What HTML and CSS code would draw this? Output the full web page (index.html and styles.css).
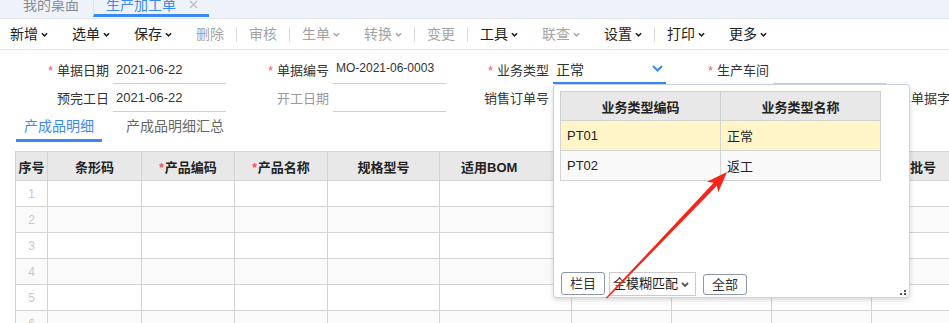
FILE: index.html
```html
<!DOCTYPE html>
<html lang="zh-CN">
  <head>
    <meta charset="UTF-8" />
    <title>生产加工单</title>
    <link rel="stylesheet" href="styles.css">
  </head>

  <body>
    <!-- page tabs -->
    <div class="tabbar">
      <div class="tab">我的桌面</div>
      <div class="tab active">
        生产加工单
        <svg class="close" width="9" height="9" viewBox="0 0 9 9">
          <path d="M1 1L8 8M8 1L1 8" stroke="#bdbdbd" stroke-width="1.3" fill="none" />
        </svg>
      </div>
    </div>

    <!-- toolbar -->
    <div class="toolbar">
      <span class="tb first">新增<svg class="chev" viewBox="0 0 8 5"><path d="M1 1l3 3 3-3" /></svg></span>
      <span class="tb">选单<svg class="chev" viewBox="0 0 8 5"><path d="M1 1l3 3 3-3" /></svg></span>
      <span class="tb">保存<svg class="chev" viewBox="0 0 8 5"><path d="M1 1l3 3 3-3" /></svg></span>
      <span class="tb off">删除</span>
      <span class="sep"></span>
      <span class="tb off">审核</span>
      <span class="sep"></span>
      <span class="tb off">生单<svg class="chev" viewBox="0 0 8 5"><path d="M1 1l3 3 3-3" /></svg></span>
      <span class="tb off">转换<svg class="chev" viewBox="0 0 8 5"><path d="M1 1l3 3 3-3" /></svg></span>
      <span class="sep"></span>
      <span class="tb off">变更</span>
      <span class="sep"></span>
      <span class="tb">工具<svg class="chev" viewBox="0 0 8 5"><path d="M1 1l3 3 3-3" /></svg></span>
      <span class="tb off">联查<svg class="chev" viewBox="0 0 8 5"><path d="M1 1l3 3 3-3" /></svg></span>
      <span class="tb">设置<svg class="chev" viewBox="0 0 8 5"><path d="M1 1l3 3 3-3" /></svg></span>
      <span class="sep"></span>
      <span class="tb">打印<svg class="chev" viewBox="0 0 8 5"><path d="M1 1l3 3 3-3" /></svg></span>
      <span class="tb">更多<svg class="chev" viewBox="0 0 8 5"><path d="M1 1l3 3 3-3" /></svg></span>
    </div>

    <!-- header form -->
    <div class="form">
      <div class="form-row">
        <div class="field">
          <label class="lbl"><i class="req">*</i>单据日期</label>
          <div class="inp">2021-06-22</div>
        </div>
        <div class="field">
          <label class="lbl"><i class="req">*</i>单据编号</label>
          <div class="inp small">MO-2021-06-0003</div>
        </div>
        <div class="field">
          <label class="lbl"><i class="req">*</i>业务类型</label>
          <div class="inp focus">
            正常
            <svg class="drop" width="11" height="7" viewBox="0 0 11 7"><path d="M1 1l4.5 4.5L10 1" /></svg>
          </div>
        </div>
        <div class="field">
          <label class="lbl"><i class="req">*</i>生产车间</label>
          <div class="inp"></div>
        </div>
      </div>
      <div class="form-row">
        <div class="field">
          <label class="lbl">预完工日</label>
          <div class="inp">2021-06-22</div>
        </div>
        <div class="field">
          <label class="lbl dim">开工日期</label>
          <div class="inp"></div>
        </div>
        <div class="field">
          <label class="lbl">销售订单号</label>
          <div class="inp"></div>
        </div>
        <div class="field">
          <label class="lbl"></label>
          <div class="inp none"></div>
        </div>
        <div class="field">
          <label class="lbl cut">单据字</label>
        </div>
      </div>
    </div>

    <!-- detail tabs -->
    <div class="subtabs">
      <div class="subtab active">产成品明细</div>
      <div class="subtab">产成品明细汇总</div>
    </div>

    <!-- detail grid -->
    <table class="grid">
      <colgroup>
        <col style="width:32px" />
        <col style="width:94px" />
        <col style="width:93px" />
        <col style="width:93px" />
        <col style="width:112px" />
        <col style="width:132px" />
        <col style="width:100px" />
        <col style="width:100px" />
        <col style="width:100px" />
        <col style="width:120px" />
      </colgroup>
      <thead>
        <tr>
          <th>序号</th>
          <th>条形码</th>
          <th><i class="req">*</i>产品编码</th>
          <th><i class="req">*</i>产品名称</th>
          <th>规格型号</th>
          <th class="th-left">适用BOM</th>
          <th></th>
          <th></th>
          <th></th>
          <th class="th-left far">批号</th>
        </tr>
      </thead>
      <tbody>
        <tr><td class="no">1</td><td></td><td></td><td></td><td></td><td></td><td></td><td></td><td></td><td></td></tr>
        <tr><td class="no">2</td><td></td><td></td><td></td><td></td><td></td><td></td><td></td><td></td><td></td></tr>
        <tr><td class="no">3</td><td></td><td></td><td></td><td></td><td></td><td></td><td></td><td></td><td></td></tr>
        <tr><td class="no">4</td><td></td><td></td><td></td><td></td><td></td><td></td><td></td><td></td><td></td></tr>
        <tr><td class="no">5</td><td></td><td></td><td></td><td></td><td></td><td></td><td></td><td></td><td></td></tr>
        <tr><td class="no">6</td><td></td><td></td><td></td><td></td><td></td><td></td><td></td><td></td><td></td></tr>
      </tbody>
    </table>

    <!-- business type lookup -->
    <div class="popup">
      <table class="pick">
        <thead>
          <tr><th>业务类型编码</th><th>业务类型名称</th></tr>
        </thead>
        <tbody>
          <tr class="cur"><td>PT01</td><td>正常</td></tr>
          <tr><td>PT02</td><td>返工</td></tr>
        </tbody>
      </table>
      <div class="pop-foot">
        <span class="btn">栏目</span>
        <span class="select">全模糊匹配<svg width="8" height="5" viewBox="0 0 8 5"><path d="M1 1l3 3 3-3" /></svg></span>
        <span class="btn short">全部</span>
      </div>
      <svg class="grip" width="7" height="6" viewBox="0 0 7 6">
        <rect x="4" y="0" width="2" height="2" />
        <rect x="0" y="3" width="2" height="2" />
        <rect x="4" y="3" width="2" height="2" />
      </svg>
    </div>

    <!-- annotation -->
    <svg class="arrow" width="949" height="323" viewBox="0 0 949 323">
      <polygon points="607,298.6 716.9,185.8 718.2,192.6 727,172 706.9,181.8 713.7,182.8 606,297.6" />
    </svg>
  </body>
</html>
```

FILE: styles.css
```css
* {
  margin: 0;
  padding: 0;
}

body {
  position: relative;
  width: 949px;
  height: 323px;
  overflow: hidden;
  background: #fff;
  color: #333;
  font-family: "Liberation Sans", "Noto Sans CJK SC", sans-serif;
  font-size: 13px;
}

i {
  font-style: normal;
}

.req {
  color: #f5505a;
  margin-right: 4px;
  font-size: 12px;
}

/* page tabs */
.tabbar {
  display: flex;
  height: 19px;
  padding-left: 9px;
  box-sizing: border-box;
  background: #eef3fb;
  border-bottom: 1px solid #e2e5ea;
  overflow: hidden;
}

.tab {
  display: flex;
  align-items: flex-start;
  height: 17px;
  box-sizing: border-box;
  padding: 0 14px;
  font-size: 14px;
  line-height: 10px;
  color: #8c8c8c;
}

.tab.active {
  padding: 0 11px 0 12px;
  color: #3b88f4;
  border-left: 1px solid #dde3ec;
  border-bottom: 3px solid #3b88f4;
}

.close {
  margin-left: 13px;
}

/* toolbar */
.toolbar {
  display: flex;
  align-items: center;
  height: 31px;
  box-sizing: border-box;
  border-bottom: 1px solid #e4e4e4;
}

.tb {
  display: flex;
  align-items: center;
  padding: 0 12px;
  font-size: 14px;
  line-height: 20px;
  color: #222;
}

.tb.first {
  padding-left: 10px;
}

.tb.off {
  color: #a3a3a3;
}

.chev {
  width: 7px;
  height: 5px;
  margin-left: 3px;
  fill: none;
  stroke: #222;
  stroke-width: 1.8;
}

.tb.off .chev {
  stroke: #a8a8a8;
}

.sep {
  width: 1px;
  height: 15px;
  background: #dcdcdc;
}

/* form */
.form {
  padding: 7px 0 0 6px;
}

.form-row {
  display: flex;
  height: 28px;
}

.field {
  display: flex;
  flex: none;
  width: 220px;
}

.lbl {
  width: 107px;
  padding-right: 4px;
  box-sizing: border-box;
  text-align: right;
  line-height: 27px;
  white-space: nowrap;
}

.lbl.dim {
  color: #9a9a9a;
}

.lbl.cut {
  padding-right: 43px;
}

.inp {
  display: flex;
  align-items: center;
  justify-content: space-between;
  width: 113px;
  height: 27px;
  box-sizing: border-box;
  padding: 0 3px;
  border-bottom: 1px solid #cfcfcf;
  line-height: 26px;
  white-space: nowrap;
}

.inp.small {
  font-size: 12px;
  align-items: flex-start;
  line-height: 22px;
}

.inp.focus {
  border-bottom: 2px solid #3b88f4;
  font-size: 14px;
}

.inp.none {
  border-bottom-color: transparent;
}

.drop {
  margin-top: -3px;
  fill: none;
  stroke: #3b88f4;
  stroke-width: 2;
}

/* detail tabs */
.subtabs {
  display: flex;
  gap: 16px;
  height: 29px;
  padding-left: 16px;
}

.subtab {
  padding: 0 8px;
  font-size: 14px;
  line-height: 26px;
  color: #666;
  border-bottom: 3px solid transparent;
}

.subtab.active {
  color: #3b88f4;
  border-bottom-color: #3b88f4;
}

/* grid */
.grid {
  margin: 9px 0 0 15px;
  width: 976px;
  table-layout: fixed;
  border-collapse: collapse;
}

.grid th {
  height: 28px;
  padding: 0;
  background: #e8e8e8;
  border: 1px solid #d3d3d3;
  font-size: 13px;
  color: #222;
  text-align: center;
  white-space: nowrap;
}

.grid th .req {
  margin-right: 1px;
}

.grid th.th-left {
  text-align: left;
  padding-left: 21px;
}

.grid th.far {
  padding-left: 38px;
}

.grid td {
  height: 25px;
  padding: 0;
  border: 1px solid #d3d3d3;
}

.grid tbody tr:nth-child(even) td {
  background: #fafafa;
}

.grid td.no {
  text-align: center;
  font-size: 12px;
  color: #c8c8c8;
}

/* lookup popup */
.popup {
  position: absolute;
  left: 553px;
  top: 84px;
  display: flex;
  flex-direction: column;
  width: 357px;
  height: 214px;
  box-sizing: border-box;
  padding: 6px 0 0 6px;
  background: #fff;
  border: 1px solid #c8d3e2;
  border-radius: 4px;
  box-shadow: 0 2px 5px rgba(0, 0, 0, 0.16);
}

.pick {
  width: 321px;
  table-layout: fixed;
  border-collapse: collapse;
}

.pick th {
  height: 28px;
  padding: 0;
  background: #e8e8e8;
  border: 1px solid #d0d0d0;
  font-size: 13px;
  color: #222;
}

.pick td {
  height: 29px;
  padding: 0 0 0 6px;
  border: 1px solid #d4d4d4;
  background: #f9f9f9;
  font-size: 13px;
  color: #222;
}

.pick tr.cur td {
  background: #fff5c9;
}

.pop-foot {
  display: flex;
  align-items: center;
  margin-top: auto;
  padding: 0 0 1px 1px;
}

.btn {
  height: 23px;
  box-sizing: border-box;
  padding: 0 8px;
  border: 1px solid #8d97a6;
  border-radius: 3px;
  background: #fff;
  line-height: 21px;
  color: #333;
}

.btn.short {
  height: 21px;
  line-height: 19px;
  margin-top: 2px;
}

.select {
  display: flex;
  align-items: center;
  justify-content: space-between;
  width: 87px;
  height: 24px;
  box-sizing: border-box;
  margin: 2px 7px 0 4px;
  padding: 0 6px 0 3px;
  border: 1px solid #cacaca;
  line-height: 22px;
  color: #222;
}

.select svg {
  fill: none;
  stroke: #555;
  stroke-width: 1.8;
}

.grip {
  position: absolute;
  right: 2px;
  bottom: 1px;
  fill: #555;
}

/* red annotation arrow */
.arrow {
  position: absolute;
  left: 0;
  top: 0;
  pointer-events: none;
}

.arrow polygon {
  fill: #f5251b;
}
```
